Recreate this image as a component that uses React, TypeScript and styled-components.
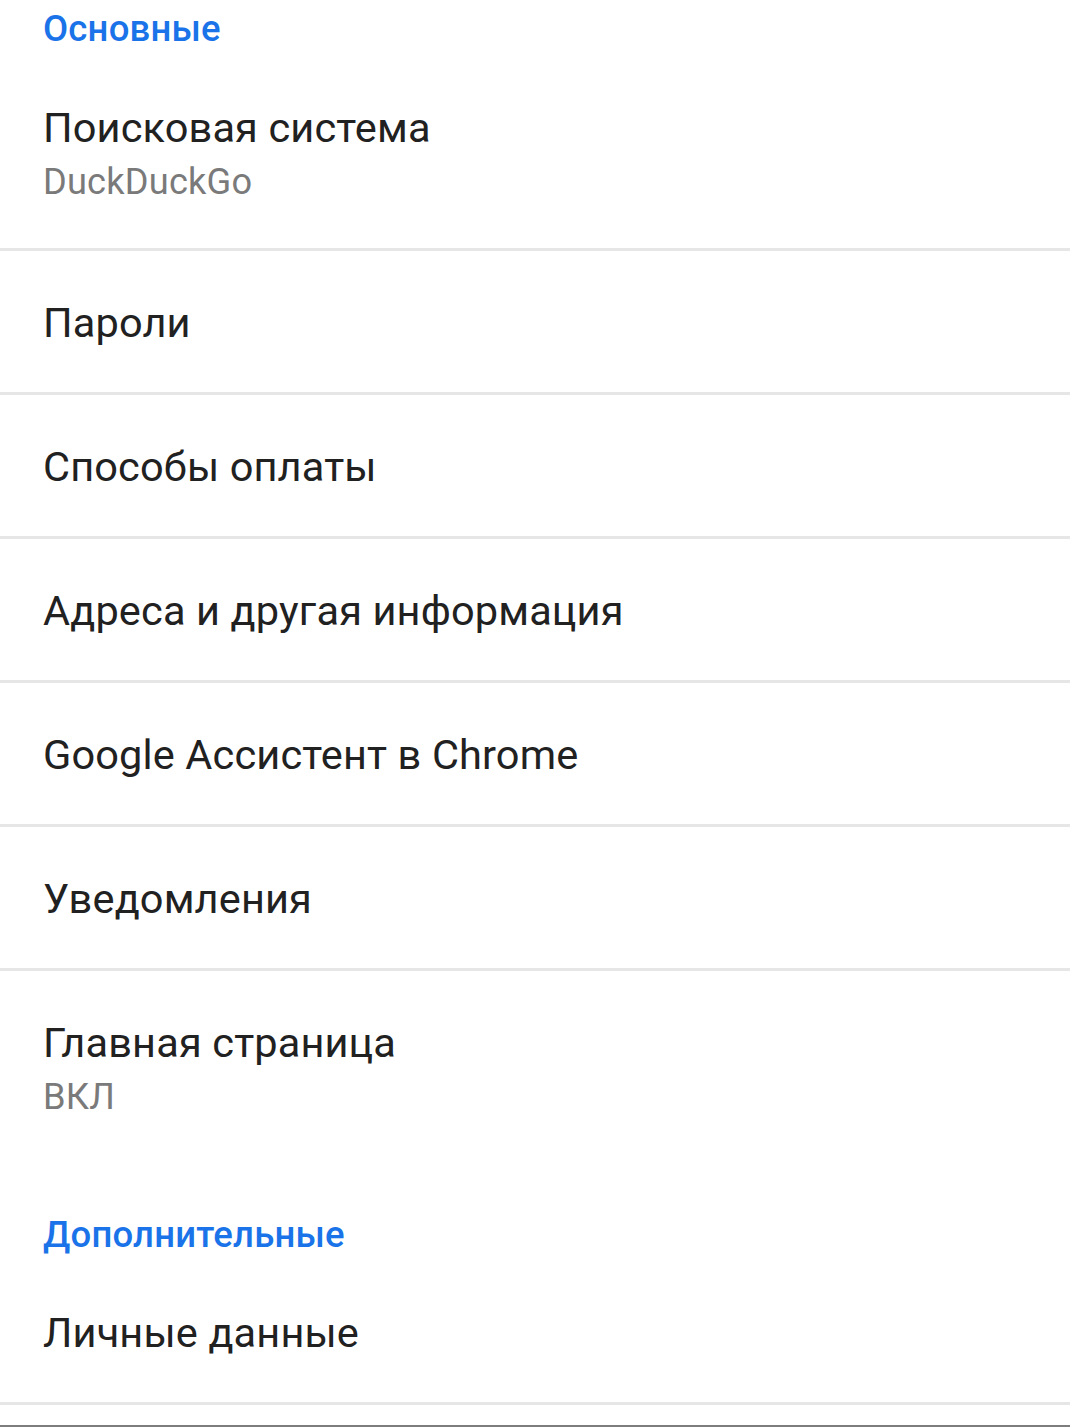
import React from "react";
import styled, { createGlobalStyle } from "styled-components";

const GlobalStyle = createGlobalStyle`
  html, body {
    margin: 0;
    padding: 0;
    background: #ffffff;
  }
  body {
    font-family: Roboto, "Noto Sans", "Liberation Sans", sans-serif;
    -webkit-font-smoothing: antialiased;
  }
`;

const Screen = styled.div`
  width: 1070px;
  height: 1427px;
  overflow: hidden;
  display: flex;
  flex-direction: column;
  background: #ffffff;
  box-sizing: border-box;
  border-bottom: 2px solid #7d7d7d;
`;

const SectionHeader = styled.div<{ $top: number; $height: number }>`
  height: ${(p) => p.$height}px;
  padding: ${(p) => p.$top}px 0 0 43px;
  box-sizing: border-box;
  color: #1a73e8;
  font-size: 36.5px;
  font-weight: 500;
  line-height: 40px;
  letter-spacing: 0.2px;
`;

const Row = styled.div<{ $height: number; $divider: boolean; $shift: number }>`
  height: ${(p) => p.$height}px;
  box-sizing: border-box;
  padding-left: 43px;
  padding-top: ${(p) => p.$shift}px;
  display: flex;
  flex-direction: column;
  justify-content: center;
  border-bottom: ${(p) => (p.$divider ? "3px solid #e6e6e6" : "none")};
`;

const Title = styled.div`
  color: #212121;
  font-size: 41.5px;
  line-height: 54px;
  letter-spacing: 0.15px;
`;

const Subtitle = styled.div`
  color: #7a7a7a;
  font-size: 36.2px;
  line-height: 54px;
  letter-spacing: 0.2px;
`;

type Item = { title: string; subtitle?: string; divider?: boolean };

const basic: Item[] = [
  { title: "Поисковая система", subtitle: "DuckDuckGo", divider: true },
  { title: "Пароли", divider: true },
  { title: "Способы оплаты", divider: true },
  { title: "Адреса и другая информация", divider: true },
  { title: "Google Ассистент в Chrome", divider: true },
  { title: "Уведомления", divider: true },
  { title: "Главная страница", subtitle: "ВКЛ", divider: false },
];

const advanced: Item[] = [{ title: "Личные данные", divider: true }];

const SettingRow: React.FC<{ item: Item }> = ({ item }) => (
  <Row
    $height={item.subtitle ? (item.divider ? 195 : 192) : 144}
    $divider={!!item.divider}
    $shift={item.subtitle ? 6 : 3}
  >
    <Title>{item.title}</Title>
    {item.subtitle && <Subtitle>{item.subtitle}</Subtitle>}
  </Row>
);

export default function App() {
  return (
    <>
      <GlobalStyle />
      <Screen>
        <SectionHeader $top={9} $height={56}>
          Основные
        </SectionHeader>
        {basic.map((it) => (
          <SettingRow key={it.title} item={it} />
        ))}
        <SectionHeader $top={52} $height={98}>
          Дополнительные
        </SectionHeader>
        {advanced.map((it) => (
          <SettingRow key={it.title} item={it} />
        ))}
      </Screen>
    </>
  );
}
